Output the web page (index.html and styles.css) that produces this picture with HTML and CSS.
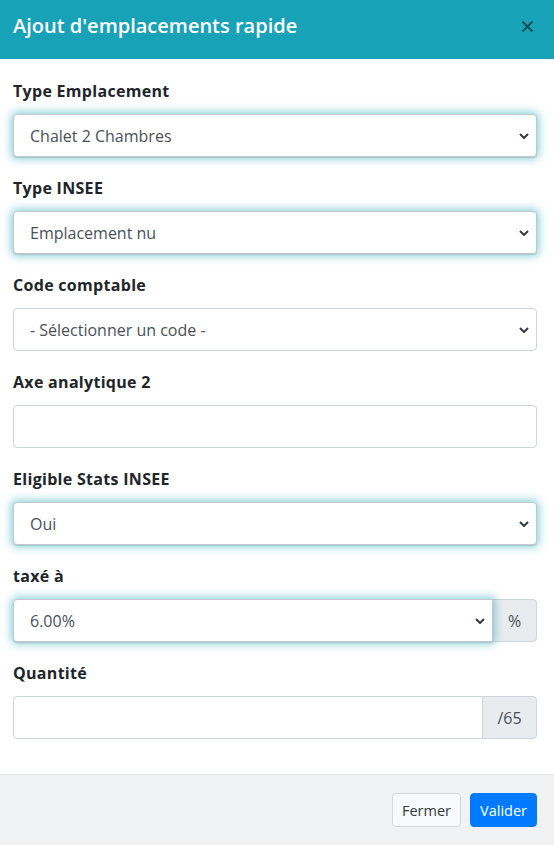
FILE: index.html
```html
<!DOCTYPE html>
<html lang="fr">
<head>
  <meta charset="UTF-8">
  <title>Ajout d'emplacements rapide</title>
  <meta name="viewport" content="width=device-width, initial-scale=1">
  <link rel="stylesheet" href="styles.css">
</head>
<body>
  <div class="modal">
    <div class="modal-header">
      <h5 class="modal-title">Ajout d'emplacements rapide</h5>
      <button type="button" class="close" aria-label="Fermer">
        <svg width="13" height="13" viewBox="0 0 13 13">
          <path d="M1.5 1.5L11.5 11.5M11.5 1.5L1.5 11.5" stroke="currentColor" stroke-width="1.9" fill="none"/>
        </svg>
      </button>
    </div>

    <form class="modal-body" onsubmit="return false;">
      <div class="form-group">
        <label for="type">Type Emplacement</label>
        <div class="select-wrap">
          <select id="type" class="form-control glow">
            <option>Chalet 2 Chambres</option>
          </select>
          <svg class="chevron" width="10" height="6" viewBox="0 0 10 6"><path d="M1 1l4 4 4-4"/></svg>
        </div>
      </div>

      <div class="form-group">
        <label for="insee">Type INSEE</label>
        <div class="select-wrap">
          <select id="insee" class="form-control glow">
            <option>Emplacement nu</option>
          </select>
          <svg class="chevron" width="10" height="6" viewBox="0 0 10 6"><path d="M1 1l4 4 4-4"/></svg>
        </div>
      </div>

      <div class="form-group">
        <label for="code">Code comptable</label>
        <div class="select-wrap">
          <select id="code" class="form-control">
            <option>- Sélectionner un code -</option>
          </select>
          <svg class="chevron" width="10" height="6" viewBox="0 0 10 6"><path d="M1 1l4 4 4-4"/></svg>
        </div>
      </div>

      <div class="form-group">
        <label for="axe">Axe analytique 2</label>
        <input type="text" id="axe" class="form-control">
      </div>

      <div class="form-group">
        <label for="stats">Eligible Stats INSEE</label>
        <div class="select-wrap">
          <select id="stats" class="form-control glow">
            <option>Oui</option>
          </select>
          <svg class="chevron" width="10" height="6" viewBox="0 0 10 6"><path d="M1 1l4 4 4-4"/></svg>
        </div>
      </div>

      <div class="form-group">
        <label for="taxe">taxé à</label>
        <div class="input-group">
          <div class="select-wrap">
            <select id="taxe" class="form-control glow">
              <option>6.00%</option>
            </select>
            <svg class="chevron" width="10" height="6" viewBox="0 0 10 6"><path d="M1 1l4 4 4-4"/></svg>
          </div>
          <span class="addon addon-pct">%</span>
        </div>
      </div>

      <div class="form-group">
        <label for="qte">Quantité</label>
        <div class="input-group">
          <input type="text" id="qte" class="form-control">
          <span class="addon addon-qty">/65</span>
        </div>
      </div>
    </form>

    <div class="modal-footer">
      <button type="button" class="btn btn-light">Fermer</button>
      <button type="submit" class="btn btn-primary">Valider</button>
    </div>
  </div>
</body>
</html>
```

FILE: styles.css
```css
* {
  box-sizing: border-box;
}

body {
  margin: 0;
  background: #fff;
  font-family: "Segoe UI", "Open Sans", sans-serif;
  color: #212529;
}

.modal {
  width: 554px;
  min-height: 845px;
  display: flex;
  flex-direction: column;
  background: #fff;
}

/* header */
.modal-header {
  height: 59px;
  background: #17a2b8;
  display: flex;
  align-items: center;
  justify-content: space-between;
  padding: 0 20px 7px 13px;
}

.modal-title {
  margin: 0;
  color: #fff;
  font-size: 20px;
  font-weight: 600;
  line-height: 30px;
}

.close {
  border: none;
  background: none;
  padding: 0;
  width: 13px;
  height: 13px;
  color: rgba(0, 0, 0, 0.5);
  cursor: pointer;
  display: flex;
}

/* body */
.modal-body {
  padding: 21px 17px 15px 13px;
  margin: 0;
}

.form-group {
  margin-bottom: 20px;
}

label {
  display: block;
  font-size: 16px;
  font-weight: 700;
  letter-spacing: 0.3px;
  line-height: 22px;
  margin-bottom: 12px;
}

.form-control {
  display: block;
  width: 100%;
  height: 43px;
  padding: 0 30px 0 16px;
  font-family: inherit;
  font-size: 16px;
  color: #495057;
  background: #fff;
  border: 1px solid #ced4da;
  border-radius: 4px;
  outline: none;
  appearance: none;
  -webkit-appearance: none;
}

.form-control.glow {
  border-color: #c3c9cf;
  box-shadow: 0 1px 1px rgba(0, 0, 0, 0.12), 0 0 8px 2px rgba(23, 162, 184, 0.5);
}

.select-wrap {
  position: relative;
}

.chevron {
  position: absolute;
  right: 8px;
  top: 19px;
  fill: none;
  stroke: #343a40;
  stroke-width: 2;
  pointer-events: none;
}

/* select or input joined with a grey suffix */
.input-group {
  display: flex;
}

.input-group .select-wrap,
.input-group > .form-control {
  flex: 1;
  position: relative;
  z-index: 1;
}

.input-group .form-control {
  border-top-right-radius: 0;
  border-bottom-right-radius: 0;
}

.addon {
  display: flex;
  align-items: center;
  justify-content: center;
  height: 43px;
  margin-left: -1px;
  background: #e9ecef;
  border: 1px solid #ced4da;
  border-radius: 0 4px 4px 0;
  font-size: 16px;
  color: #495057;
}

.addon-pct {
  width: 45px;
}

.addon-qty {
  width: 55px;
}

/* footer */
.modal-footer {
  flex: 1;
  background: #f1f2f4;
  border-top: 1px solid #e3e6ea;
  display: flex;
  justify-content: flex-end;
  align-items: flex-start;
  gap: 9px;
  padding: 18px 17px 0 0;
}

.btn {
  height: 34px;
  padding: 0 8px;
  font-family: inherit;
  font-size: 14.5px;
  border-radius: 4px;
  cursor: pointer;
}

.btn-light {
  width: 69px;
  background: #f8f9fa;
  border: 1px solid #d6d8db;
  color: #343a40;
}

.btn-primary {
  width: 67px;
  background: #007bff;
  border: 1px solid #007bff;
  color: #fff;
}

.btn-primary:hover {
  background: #0069d9;
}
```
